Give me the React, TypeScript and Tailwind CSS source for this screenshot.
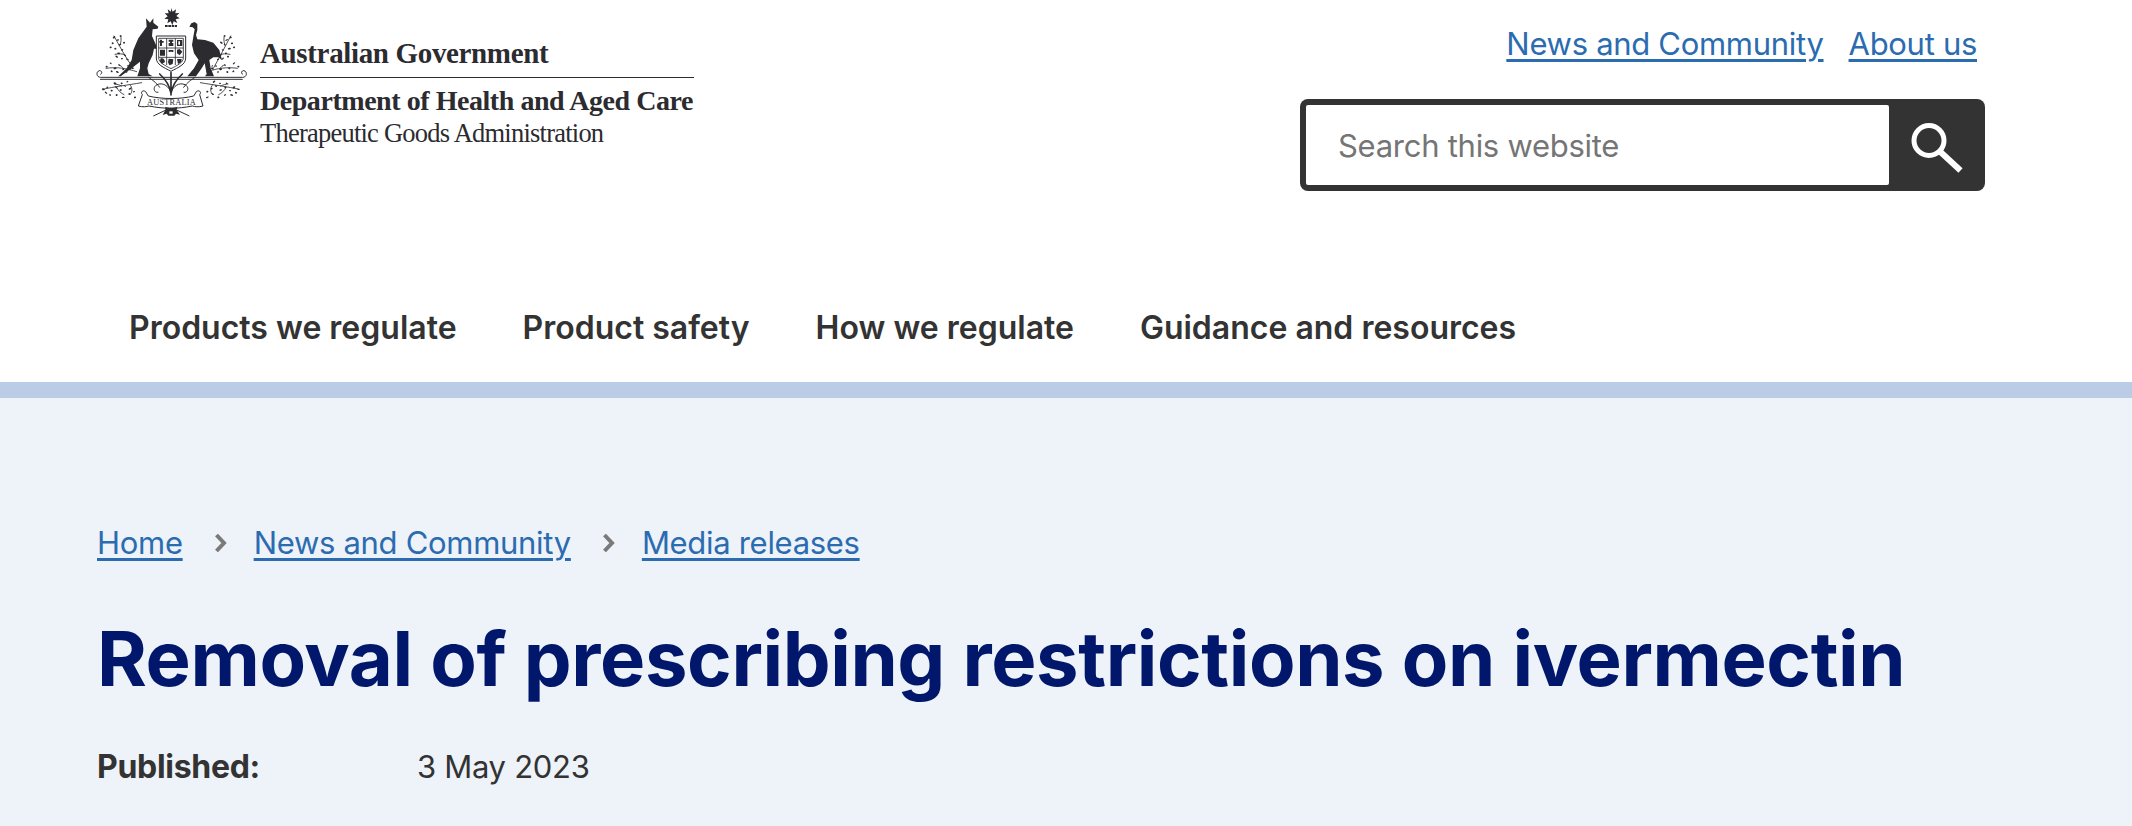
const leaves = [
  [72,112],[84,120],[68,130],[90,134],[76,146],[97,150],[86,160],[105,166],[62,142],[112,178],[102,128],[92,108],[80,170],[96,176],
  [422,112],[410,120],[426,130],[404,134],[418,146],[398,150],[408,160],[390,166],[432,142],[384,178],[394,128],[404,108],[414,170],[398,176],
  [50,200],[62,190],[75,205],[88,195],[100,208],[115,198],[65,214],[128,205],[82,216],[110,216],
  [445,200],[432,190],[418,205],[405,195],[392,208],[378,198],[430,214],[366,205],[412,216],[384,216],
  [40,268],[52,262],[65,272],[78,262],[92,270],[105,258],[120,266],[60,285],[80,285],[100,292],[118,282],[132,275],[75,250],[112,245],[95,250],[48,278],[135,292],
  [445,268],[432,262],[420,272],[406,262],[392,270],[378,258],[365,266],[425,285],[405,285],[385,292],[368,282],[352,275],[410,250],[372,245],[390,250],[438,278],[352,292],
];

const Crest = () => (
  <svg viewBox="0 0 510 375" className="w-[170px] h-[125px] shrink-0" aria-label="Commonwealth Coat of Arms">
    <path fill="#2b2b30" d="M243 24l5 11 10-7-2 12 12-1-9 9 10 7-12 3 5 11-11-5-4 12-5-12-10 6 3-12-12-2 10-7-9-9 12 0-3-12 10 7z" />
    <path stroke="#2b2b30" strokeWidth="6" strokeDasharray="8 2" d="M225 78h36" />
    {/* kangaroo */}
    <path fill="#2b2b30" d="M168 55L180 68 190 55 190 68 205 80 203 86 188 88 186 108 198 135 208 140 206 146 192 146 188 165 176 190 172 205 176 222 188 229 142 229 150 205 150 185 125 205 92 229 85 229 110 205 125 180 130 150 145 115 170 80Z" />
    {/* emu */}
    <path fill="#2b2b30" d="M298 80L304 70 314 66 322 72 322 90 318 105 322 118 345 120 370 128 388 150 396 180 385 172 370 172 358 180 362 205 372 229 345 229 350 222 344 190 335 205 318 229 292 229 312 205 326 180 312 160 306 135 310 110 314 88 308 82Z" />
    {/* compartment */}
    <path stroke="#2b2b30" strokeWidth="3" fill="none" d="M32 232h426c13 0 15-17 4-20-8-1-10 9-3 11M32 232c-13 0-15-17-4-20 8-1 10 9 3 11" />
    <path stroke="#55555a" strokeWidth="3.5" d="M30 238h428" />
    {/* shield */}
    <path fill="#fff" stroke="#2b2b30" strokeWidth="3" d="M199 108h88v66c0 20-22 28-44 40-22-12-44-20-44-40z" />
    <path fill="#fff" stroke="#2b2b30" strokeWidth="2.5" d="M206 115h74v58c0 15-18 23-37 33-19-10-37-18-37-33z" />
    <path stroke="#2b2b30" strokeWidth="2.5" d="M230 115v80M256 115v80M206 144h74M206 172h74" />
    <path fill="#2b2b30" d="M210 119h6v4h5v5h-5v10h-6v-10h-2v-5h2zM236 119h14v6h-4v4h4v9h-14v-9h4v-4h-4zM261 120h16v18h-16zM210 149h15v18h-15zM236 150h14v6h-14zM261 149l8-2 8 8-8 11-8-6zM211 176c8-3 13 2 14 10l-9 6-6-7zM236 176l14 2-2 14-10 4-4-9zM261 177h14l-1 10-10 5z" />
    <path fill="#fff" d="M265 124h5v10h-5zM240 155h6v8h-6z" />
    {/* branches */}
    <g stroke="#2b2b30" strokeWidth="2.5" fill="none" strokeLinecap="round">
      <path d="M130 205C105 170 90 140 72 108M105 165c-8-5-18-4-30-2M90 135c4-10 4-18 2-28" />
      <path d="M370 205c20-35 35-65 52-97M390 165c8-5 18-4 30-2M405 135c-4-10-4-18-2-28" />
      <path d="M140 215C110 205 80 200 48 205M100 206c-3-6-8-10-14-11M120 210c4-5 5-9 3-14" />
      <path d="M350 215c30-10 65-15 92-10M390 206c3-6 8-10 14-11M370 210c-4-5-5-9-3-14" />
      <path d="M38 268c35-8 70-12 117-20M95 258c-8-4-14-5-22-6M120 254c8 10 8 22 0 30M80 262c4 10 14 18 22 22" />
      <path d="M448 268c-35-8-70-12-117-20M392 258c8-4 14-5 22-6M368 254c-8 10-8 22 0 30M408 262c-4 10-14 18-22 22" />
    </g>
    <g stroke="#2b2b30" fill="none" strokeLinecap="round">
      <path strokeWidth="5" d="M243 285V218M243 280c-4-24-14-40-34-58M243 280c4-24 14-40 34-58" />
      <path strokeWidth="3" d="M243 276c-8-18-24-30-42-22-15 8-8 26 3 23M243 276c8-18 24-30 42-22 15 8 8 26-3 23M175 232c12 8 22 14 34 30M315 232c-12 8-22 14-34 30" />
    </g>
    <g fill="#2b2b30">
      {leaves.map(([x, y], i) => (
        <ellipse key={i} cx={x} cy={y} rx={i % 3 === 0 ? 4.5 : 3.2} ry={i % 2 === 0 ? 2.6 : 2} transform={`rotate(${(i * 37) % 90 - 45} ${x} ${y})`} />
      ))}
    </g>
    {/* ribbon */}
    <path fill="#fff" stroke="#2b2b30" strokeWidth="3" d="M157 284c-7-9 3-15 10-9 4 4 4 10 8 13 40 10 96 10 136 0 4-3 4-9 8-13 7-6 17 0 10 9l10 34c-14 4-24 2-32 0-45 9-85 9-130 0-8 2-18 4-32 0z" />
    <text x="244" y="315" textAnchor="middle" fontFamily="'Liberation Serif', serif" fontSize="25" fill="#2b2b30" textLength="146">AUSTRALIA</text>
    {/* base */}
    <path fill="#2b2b30" d="M226 320c8 4 28 4 36 0l-2 10 10 14-12-3-5 6-18 0-5-6-12 4 8-15z" />
    <path stroke="#2b2b30" strokeWidth="3" d="M190 348l38-18M298 348l-38-18" />
    <path fill="#fff" d="M238 334h10v7h-10z" />
  </svg>
);

const linkClass = "text-[#2b6cb0] underline decoration-[3px] underline-offset-[4px] tracking-[-0.3px]";

const Chevron = () => (
  <svg width="14" height="20" viewBox="0 0 14 20" className="shrink-0" fill="none">
    <path d="M2.5 2l7.5 8-7.5 8" stroke="#7a7a7a" strokeWidth="4" />
  </svg>
);

export default function App() {
  return (
    <div className="h-[826px] overflow-hidden bg-white flex flex-col text-[#333] font-['Inter',sans-serif]">
      <header className="flex justify-between h-[382px]">
        <div className="flex flex-col w-full">
          <div className="flex justify-between">
            <div className="flex pl-[90px]">
              <Crest />
              <div className="w-[434px] pt-[36px] font-['Liberation_Serif',serif] text-[#2b2b30]">
                <div className="text-[29px] leading-[34px] font-bold tracking-[-0.35px] border-b border-[#2b2b30] pb-[7px] whitespace-nowrap">Australian Government</div>
                <div className="text-[28px] leading-[34px] font-bold tracking-[-0.45px] mt-[6px] whitespace-nowrap">Department of Health and Aged Care</div>
                <div className="text-[26.5px] leading-[30px] tracking-[-0.77px] whitespace-nowrap">Therapeutic Goods Administration</div>
              </div>
            </div>
            <div className="flex flex-col items-end pr-[147px] pt-[24px]">
              <div className="flex gap-[25px] text-[31px] leading-[40px] pr-[8px]">
                <a className={linkClass}>News and Community</a>
                <a className={linkClass}>About us</a>
              </div>
              <form className="mt-[35px] flex w-[685px] h-[92px] rounded-[8px] bg-[#333] p-[6px] pr-0">
                <input
                  placeholder="Search this website"
                  className="w-[583px] h-full bg-white pl-[32px] text-[31px] tracking-[-0.27px] outline-none rounded-[2px] placeholder:text-[#757575]"
                />
                <div className="flex-1 flex items-center justify-center">
                  <svg width="56" height="56" viewBox="0 0 56 56" fill="none">
                    <circle cx="20" cy="23.5" r="15" stroke="#fff" strokeWidth="5" />
                    <path d="M31 34.5L51.5 53.5" stroke="#fff" strokeWidth="6" />
                  </svg>
                </div>
              </form>
            </div>
          </div>
          <nav className="flex gap-[66px] pl-[129px] pt-[117px] text-[32px] leading-[40px] font-semibold">
            <span>Products we regulate</span>
            <span>Product safety</span>
            <span>How we regulate</span>
            <span>Guidance and resources</span>
          </nav>
        </div>
      </header>
      <div className="h-[16px] bg-[#bbcce6]" />
      <main className="flex-1 bg-[#eef2f9] px-[97px] pt-[125px]">
        <div className="flex items-center text-[31px] leading-[40px]">
          <a className={linkClass}>Home</a>
          <span className="ml-[31px] mr-[26px]"><Chevron /></span>
          <a className={linkClass}>News and Community</a>
          <span className="ml-[31px] mr-[26px]"><Chevron /></span>
          <a className={linkClass}>Media releases</a>
        </div>
        <h1 className="mt-[47px] text-[76px] leading-[96px] font-bold tracking-[-0.4px] text-[#00176b]">Removal of prescribing restrictions on ivermectin</h1>
        <div className="mt-[41px] flex text-[32px] leading-[40px]">
          <span className="w-[320px] font-bold tracking-[-0.3px]">Published:</span>
          <span className="text-[31px] tracking-[-0.3px]">3 May 2023</span>
        </div>
      </main>
    </div>
  );
}
